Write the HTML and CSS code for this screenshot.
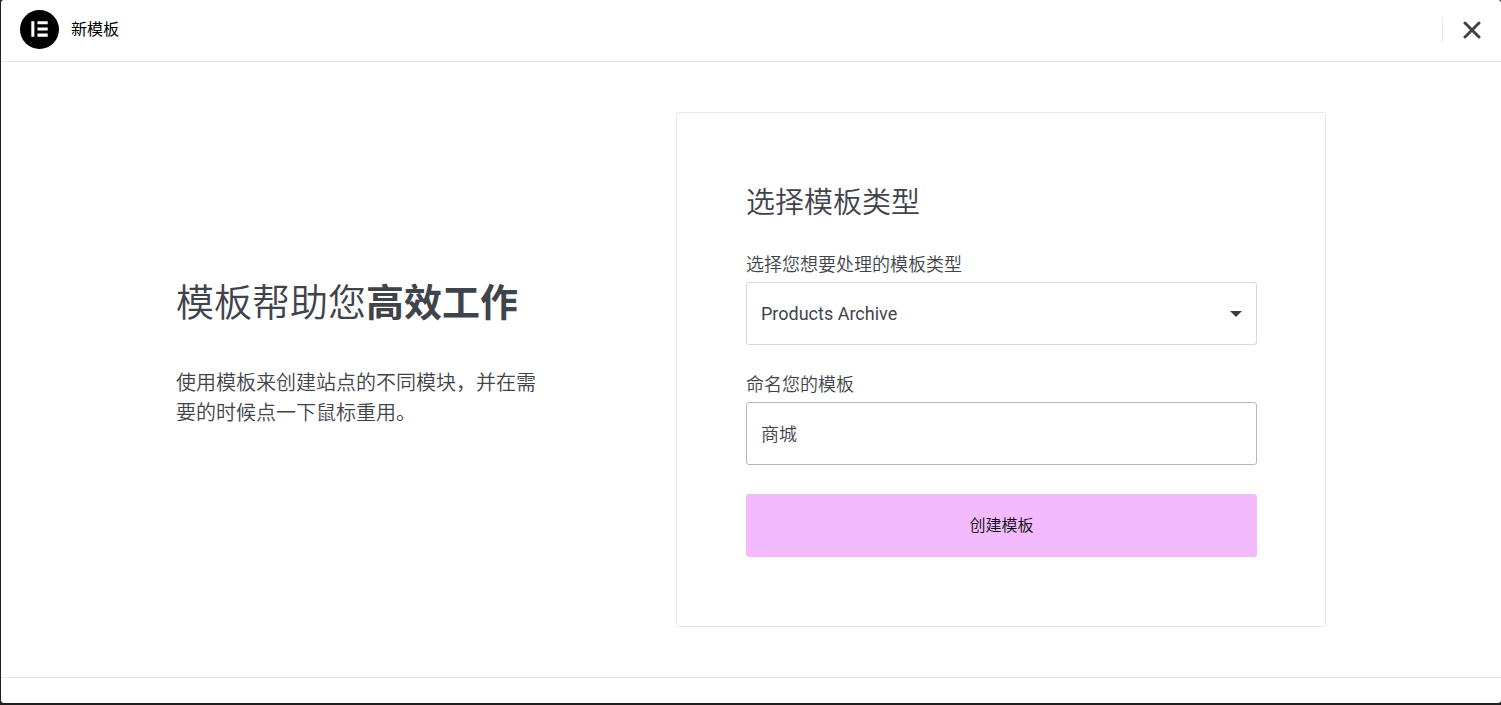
FILE: index.html
```html
<!DOCTYPE html>
<html lang="zh-CN">
<head>
<meta charset="utf-8">
<meta name="viewport" content="width=device-width, initial-scale=1">
<title>新模板</title>
<link rel="stylesheet" href="styles.css">
</head>
<body>
<div class="modal" role="dialog" aria-labelledby="modal-title">
  <header class="modal-header">
    <div class="brand">
      <svg class="brand-logo" viewBox="0 0 38 38" aria-hidden="true">
        <circle cx="19" cy="19" r="19" fill="#000"/>
        <path fill="#fff" d="M11 11h3v15h-3zM17 11h10v3H17zM17 17h10v3H17zM17 23h10v3H17z"/>
      </svg>
      <h1 class="brand-title" id="modal-title">新模板</h1>
    </div>
    <div class="header-actions">
      <button class="close-button" type="button" aria-label="关闭">
        <svg class="close-icon" viewBox="0 0 18 18" aria-hidden="true">
          <path d="M2 2l14 14M16 2L2 16" fill="none" stroke="#3f444b" stroke-width="3" stroke-linecap="round"/>
        </svg>
      </button>
    </div>
  </header>
  <main class="modal-body">
    <div class="content">
      <section class="intro">
        <h2 class="intro-title">模板帮助您<strong>高效工作</strong></h2>
        <p class="intro-text">使用模板来创建站点的不同模块，并在需要的时候点一下鼠标重用。</p>
      </section>
      <form class="card">
        <h2 class="card-title">选择模板类型</h2>
        <div class="field">
          <label class="field-label" for="template-type">选择您想要处理的模板类型</label>
          <div class="select-wrap">
            <select class="control" id="template-type">
              <option>Products Archive</option>
            </select>
            <svg class="caret" viewBox="0 0 12 6" aria-hidden="true"><path d="M0 0h12L6 6z" fill="#3a3d42"/></svg>
          </div>
        </div>
        <div class="field">
          <label class="field-label" for="template-name">命名您的模板</label>
          <input class="control control-active" id="template-name" type="text" value="商城">
        </div>
        <button class="submit" type="button">创建模板</button>
      </form>
    </div>
  </main>
  <footer class="modal-footer"></footer>
</div>
</body>
</html>
```
FILE: styles.css
```css
* {
  box-sizing: border-box;
}

body {
  margin: 0;
  min-height: 100vh;
  display: flex;
  padding: 0 0 2px 1px;
  background: #202020;
  color: #3f444b;
  font-family: Roboto, "Noto Sans CJK SC", sans-serif;
}

h1,
h2,
p {
  margin: 0;
}

.modal {
  flex: 1;
  display: flex;
  flex-direction: column;
  background: #fff;
  border-radius: 3px;
}

.modal-header {
  display: flex;
  align-items: center;
  justify-content: space-between;
  padding: 10px 20px 12px 19px;
  border-bottom: 1px solid #e6e8ea;
}

.brand {
  display: flex;
  align-items: center;
  gap: 12px;
}

.brand-logo {
  width: 39px;
  height: 39px;
}

.brand-title {
  color: #000;
  font-size: 16px;
  line-height: 24px;
  font-weight: 400;
}

.header-actions {
  display: flex;
  padding-left: 20px;
  border-left: 1px solid #e6e8ea;
}

.close-button {
  display: flex;
  align-items: center;
  height: 24px;
  padding: 0;
  border: 0;
  background: none;
  cursor: pointer;
}

.close-icon {
  width: 18px;
  height: 18px;
}

.modal-body {
  flex: 1;
  padding: 50px 20px;
}

.content {
  display: grid;
  grid-template-columns: 10fr 13fr;
  align-items: center;
  max-width: 1150px;
  margin: 0 auto;
}

.intro {
  padding: 0 130px 28px 0;
}

.intro-title {
  font-size: 38px;
  line-height: 38px;
  font-weight: 350;
  white-space: nowrap;
}

.intro-title strong {
  font-weight: 700;
}

.intro-text {
  margin-top: 46px;
  font-size: 20px;
  line-height: 30px;
  font-weight: 350;
}

.card {
  display: flex;
  flex-direction: column;
  padding: 69px 68px 69px 69px;
  border: 1px solid #e6e8ea;
  border-radius: 3px;
}

.card-title {
  margin-bottom: 30px;
  font-size: 29px;
  line-height: 42px;
  font-weight: 350;
}

.field {
  display: flex;
  flex-direction: column;
  gap: 6px;
  margin-bottom: 29px;
}

.field-label {
  font-size: 18px;
  line-height: 22px;
  font-weight: 350;
}

.select-wrap {
  position: relative;
  display: flex;
}

.control {
  width: 100%;
  height: 63px;
  padding: 0 14px;
  border: 1px solid #d5d8dc;
  border-radius: 3px;
  background: #fff;
  color: #3f444b;
  font: inherit;
  font-size: 18px;
  appearance: none;
}

.control-active {
  padding-bottom: 2px;
  border-color: #b4b8bd;
  font-weight: 350;
}

.caret {
  position: absolute;
  top: 50%;
  right: 15px;
  width: 12px;
  height: 6px;
  margin-top: -3px;
  pointer-events: none;
}

.submit {
  height: 63px;
  padding-bottom: 4px;
  border: 0;
  border-radius: 3px;
  background: #f3bafd;
  color: #0c0d0e;
  font: inherit;
  font-size: 16px;
  font-weight: 350;
  cursor: pointer;
}

.modal-footer {
  min-height: 26px;
  border-top: 1px solid #e6e8ea;
}
```
